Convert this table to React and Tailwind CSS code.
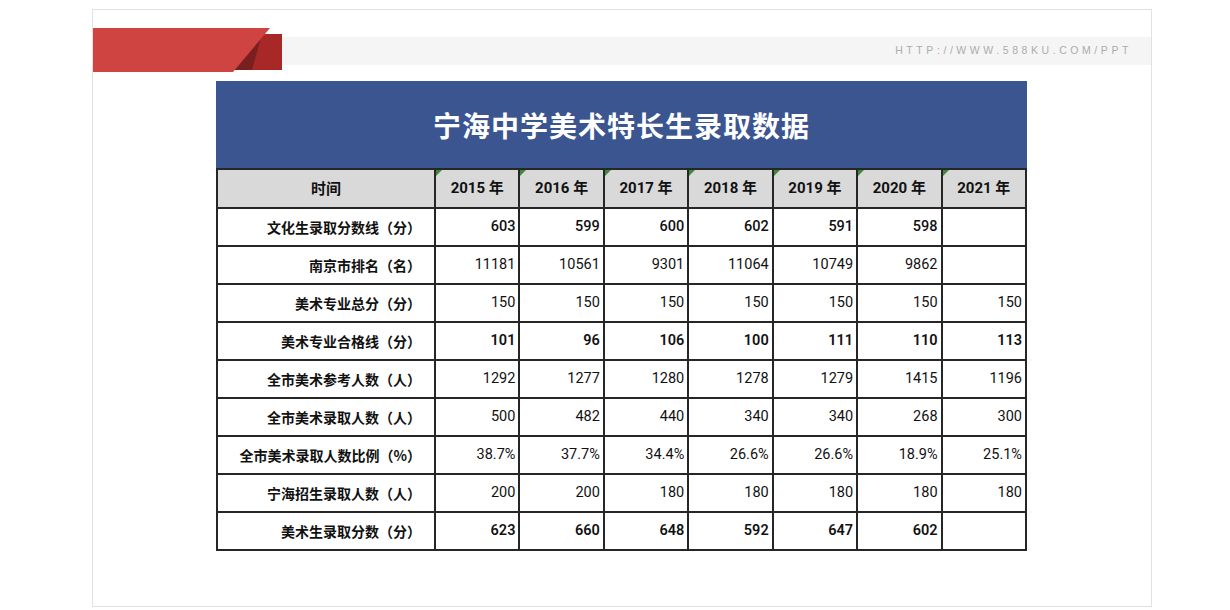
import React from 'react';

const years = ['2015 年', '2016 年', '2017 年', '2018 年', '2019 年', '2020 年', '2021 年'];

const rows = [
  { label: '文化生录取分数线（分）', values: ['603', '599', '600', '602', '591', '598', ''], weight: 'font-medium' },
  { label: '南京市排名（名）', values: ['11181', '10561', '9301', '11064', '10749', '9862', ''], weight: 'font-normal' },
  { label: '美术专业总分（分）', values: ['150', '150', '150', '150', '150', '150', '150'], weight: 'font-normal' },
  { label: '美术专业合格线（分）', values: ['101', '96', '106', '100', '111', '110', '113'], weight: 'font-semibold' },
  { label: '全市美术参考人数（人）', values: ['1292', '1277', '1280', '1278', '1279', '1415', '1196'], weight: 'font-normal' },
  { label: '全市美术录取人数（人）', values: ['500', '482', '440', '340', '340', '268', '300'], weight: 'font-normal' },
  { label: '全市美术录取人数比例（%）', values: ['38.7%', '37.7%', '34.4%', '26.6%', '26.6%', '18.9%', '25.1%'], weight: 'font-normal' },
  { label: '宁海招生录取人数（人）', values: ['200', '200', '180', '180', '180', '180', '180'], weight: 'font-normal' },
  { label: '美术生录取分数（分）', values: ['623', '660', '648', '592', '647', '602', ''], weight: 'font-semibold' },
];

const Banner = () => (
  <div className="flex items-start mt-[18px]">
    <svg width="189" height="44" viewBox="0 0 189 44" className="shrink-0">
      <rect x="152" y="6" width="37" height="36" fill="#a82828" />
      <polygon points="169,6 140,42 159,42" fill="#7a1f20" />
      <polygon points="0,0 177,0 140,44 0,44" fill="#cf4441" />
    </svg>
    <div className="flex-1 h-[28px] mt-[9px] bg-[#f5f5f5] flex items-center justify-end pr-[19px]">
      <span className="text-[10.5px] tracking-[0.34em] text-[#acacac] font-['Liberation_Sans',sans-serif]">
        HTTP://WWW.588KU.COM/PPT
      </span>
    </div>
  </div>
);

const App = () => {
  return (
    <div className="w-[1230px] h-[610px] bg-white pt-[9px] pl-[92px]">
      <div className="w-[1060px] h-[598px] border border-[#e2e2e2] bg-white">
        <Banner />

        <div className="ml-[123px] mt-[9px] w-[811px] font-['Roboto','Noto_Sans_CJK_SC',sans-serif] text-[#111]">
          {/* Title */}
          <div className="h-[87px] bg-[#3b5591] flex items-center justify-center">
            <h1 className="text-white text-[28px] font-bold font-['Noto_Sans_CJK_SC',sans-serif] tracking-[1px]">
              宁海中学美术特长生录取数据
            </h1>
          </div>

          <table className="w-[811px] table-fixed border-collapse">
            <colgroup>
              <col className="w-[218px]" />
              {years.map((y) => <col key={y} />)}
            </colgroup>
            <thead>
              <tr className="h-[39px] bg-[#d9d9d9]">
                <th className="border-2 border-[#262626] text-[15px] font-bold font-['Noto_Sans_CJK_SC',sans-serif]">时间</th>
                {years.map((y) => (
                  <th key={y} className="relative border-2 border-[#262626] text-[15px] font-bold">
                    <span className="absolute left-0 top-0 w-0 h-0 border-t-[6px] border-r-[6px] border-t-[#3d8b3a] border-r-transparent" />
                    {y}
                  </th>
                ))}
              </tr>
            </thead>
            <tbody>
              {rows.map((row) => (
                <tr key={row.label} className="h-[38px]">
                  <td className="border-2 border-[#262626] text-right pr-[13px] text-[14px] font-bold font-['Noto_Sans_CJK_SC',sans-serif]">
                    {row.label}
                  </td>
                  {row.values.map((v, i) => (
                    <td key={i} className={`border-2 border-[#262626] text-right pr-[3px] text-[14.5px] ${row.weight}`}>
                      {v}
                    </td>
                  ))}
                </tr>
              ))}
            </tbody>
          </table>
        </div>
      </div>
    </div>
  );
};

export default App;
